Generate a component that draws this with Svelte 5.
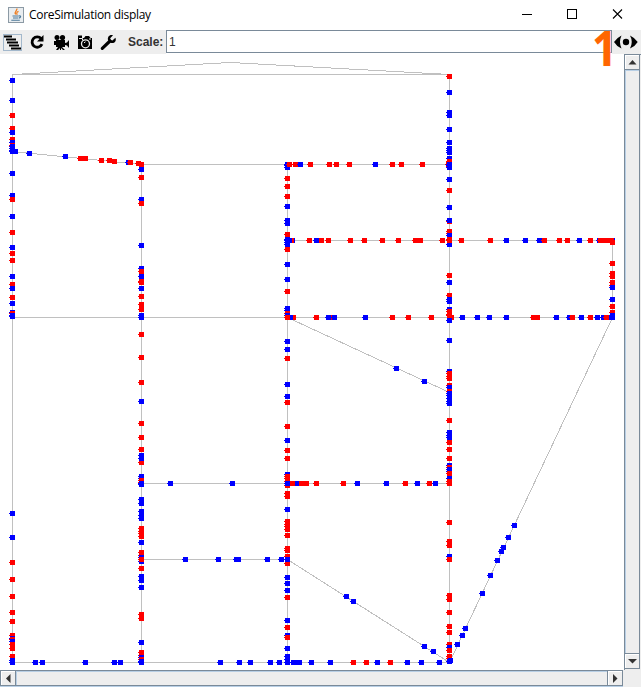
<script>
  // Road network: each entry is a polyline in canvas coordinates.
  const roads = [
    '12,74 449,74', '12,74 230,62 449,74', '12,74 12,662', '141,164 141,662', '287,164 287,662',
    '449,74 449,662', '141,164 449,164', '287,240 612,240', '12,317 612,317', '612,240 612,317',
    '141,483 449,483', '141,559 287,559', '12,662 449,662', '12,151 141,164',
    '287,317 449,392', '287,559 449,662', '449,662 612,317'
  ];

  // Vehicles on vertical roads: x, then colour + y in paint order.
  const columns = [
    [12, 'b80 b100 r115 r128 b132 r139 b142 r145 b146 b148 b150 b151 b173 b195 r199 b216 r232 b247 r253 r260 b276 r284 b288 r297 b303 b312 r313 b315 b316 b513 b537 r562 r579 r596 r612 r621 r635 b638 r639 b641 r644 r648 r656 b660 b662'],
    [141, 'b169 r164 r177 b199 r203 b245 b268 r271 b276 r281 r282 b288 r296 r304 r309 b315 b317 r334 r357 r382 b401 r423 r437 r449 b455 r462 b458 b476 b478 r480 r482 b483 b484 b499 b503 b511 b515 b518 r528 r531 r533 r536 b542 r552 r555 b557 b561 r559 r568 b576 b580 b587 r614 r618 b642 r652 r655 b657 r659 b661 b662'],
    [287, 'b164 b165 b167 r178 r186 r196 b206 b220 b223 r234 b239 r249 b240 b242 b244 b264 b279 r291 b308 b310 r313 b315 b341 b349 r358 b384 b396 r402 r426 b440 r450 r458 b474 r476 r478 r481 r485 r493 r496 b509 r521 r524 r526 r529 r535 r548 r550 r556 r563 b559 b577 b583 b590 r597 b620 r627 b635 r637 b648 b656 b659 b662'],
    [448, 'r164'],
    [449, 'r76 b92 b112 b115 b129 b142 b148 b150 b152 b158 r161 b164 b165 b167 b179 r190 b207 r221 b220 r231 r233 b235 b244 r239 r275 b282 r295 b299 b301 b309 r311 r314 b340 b371 r373 r376 r378 r385 b387 r391 b393 b395 b398 b401 b403 r420 b432 b435 b437 r442 r449 r458 b465 r467 b469 b471 r473 b478 r481 r522 r541 r545 b556 r559 r595 r599 r612 r626 r632 r644 b647 r650 r656 r658'],
    [612, 'b240 r242 r263 r273 r276 r282 r285 b287 b299 r306 r312 b315']
  ];

  // Vehicles on horizontal roads: y, then colour + x in paint order.
  const rows = [
    [164, 'r295 r289 b300 r310 r329 r336 r349 b375 r392 r401 r422'],
    [240, 'b292 r291 b289 b287 r309 r321 b316 r328 r350 r364 r382 r398 r415 r420 r442 r449 r461 r490 b506 b525 b539 r544 r559 r567 b579 r590 b599 r600 r604 r606 r608 r611'],
    [317, 'r293 b290 r287 r316 r331 b334 b328 b365 r392 r408 r431 r451 b462 b477 b489 b506 r533 r537 b556 b569 r572 b581 r590 b597 b603 b609 r606 b612'],
    [483, 'b170 b232 r306 r303 r300 b296 r292 b287 r316 r343 b357 b386 r405 b417 r429 b435 r449'],
    [559, 'b185 b218 b236 b238 b267 b281 b287'],
    [662, 'b35 b42 b85 b114 b120 b220 b239 b250 b270 b279 b287 b293 b296 b299 b311 b330 r353 r366 b377 r390 b407 b421 b439']
  ];

  const others = [
    ['b', 15, 151], ['b', 29, 153], ['b', 65, 156], ['r', 80, 158], ['r', 85, 158], ['r', 101, 160],
    ['r', 109, 160], ['r', 114, 161], ['b', 128, 162], ['r', 130, 162], ['r', 138, 163], ['r', 141, 164],
    ['b', 396, 368], ['b', 424, 381], ['b', 346, 596], ['b', 353, 601], ['b', 424, 646], ['b', 433, 651],
    ['b', 514, 525], ['b', 508, 537], ['b', 503, 547], ['b', 501, 551], ['b', 497, 560], ['b', 490, 575],
    ['b', 482, 593], ['b', 465, 628], ['b', 462, 635], ['b', 457, 644], ['b', 450, 660], ['b', 449, 661],
    ['b', 449, 320], ['r', 449, 315], ['b', 612, 317]
  ];

  const cars = [
    ...columns.flatMap(([x, list]) => list.split(' ').map((s) => [s[0], x, +s.slice(1)])),
    ...rows.flatMap(([y, list]) => list.split(' ').map((s) => [s[0], +s.slice(1), y])),
    ...others
  ];
</script>

<div class="window">
  <header class="title">
    <svg class="java" width="16" height="16" viewBox="0 0 16 16">
      <rect x=".5" y=".5" width="15" height="15" fill="#e9edf0" stroke="#8c9aa5" />
      <path d="M8.8 1.5c1 2-3.2 3-1.2 6M10.5 4.3C8 5.5 8.5 6 9.2 7.7" fill="none" stroke="#ee7b1c" stroke-width="1.3" />
      <path d="M4.5 9h6.3M5 11h5.2M3.3 13.3h8.5M11 9c2.4-.5 2 1.6-.2 2.2" fill="none" stroke="#4c7898" stroke-width="1.1" />
    </svg>
    <span class="caption">CoreSimulation display</span>
    <svg class="controls" width="122" height="30" viewBox="0 0 122 30" shape-rendering="crispEdges">
      <path d="M3 14.5h10M48.500 9.500h9v9h-9z" fill="none" stroke="#000" />
      <path d="M94 9.500l9 9M103 9.500l-9 9" stroke="#000" stroke-width="1.1" shape-rendering="auto" />
    </svg>
  </header>

  <div class="toolbar">
    <svg class="tools" width="125" height="24" viewBox="0 0 125 24">
      <rect x="3.500" y="4.500" width="18" height="16" fill="#eee" stroke="#a3b8cc" />
      <path d="M4 6.500h8M6 9.500h10M7 12.500h11M9 15.500h10M11 18.500h10" stroke="#000" stroke-width="2" />
      <path d="M41.200 8.600A5.200 5.200 0 1 0 42 14.200" fill="none" stroke="#000" stroke-width="2.800" />
      <path d="M43.500 5v6.500H37z" />
      <circle cx="57" cy="7.500" r="2.500" /><circle cx="62.500" cy="7.500" r="2.600" />
      <path d="M56 10h9v7h-3l3 3h-2l-2-2v2h-1v-2l-2 2h-2l2-3h-2zM54 11h2v4h-2zM65 13l2-.5 2-2.500v8l-2-2.500-2-.5z" />
      <path d="M78 5.500h4V8h2l1.500-2h3.500L90.500 8H92v11H78z" />
      <circle cx="85.500" cy="13.800" r="4" fill="#000" stroke="#eee" stroke-width="1.300" />
      <path d="M84 12.800l1.500-1M79 8.500h3.500v1.500M89 9h2" stroke="#eee" fill="none" />
      <path d="M102.300 18.300L110 11" stroke="#000" stroke-width="3.200" stroke-linecap="round" />
      <path d="M113 5.300l-2.800 3 .5 1.700 1.700.4 3-2.700c1.500 3.200-1.200 6.300-4.800 5.100l-2.500-2.500c-1-3.200 1.500-6.200 4.900-5z" />
    </svg>
    <span class="label">Scale:</span>
    <div class="field">1</div>
    <svg class="eye" width="29" height="24" viewBox="0 0 29 24">
      <path d="M9.500 5.500Q4.500 8 2 12q2.500 4.300 7.500 6.500Q6.500 12 9.500 5.500zM18 5.500q5.200 2.500 7.700 6.500-2.500 4.300-7.700 6.500 3.500-6.500 0-13z" />
      <circle cx="14" cy="12" r="3.200" />
    </svg>
  </div>

  <div class="view">
    <svg class="canvas" width="624" height="616" viewBox="0 54 624 616" shape-rendering="crispEdges">
      <g transform="translate(.5 .5)" fill="none" stroke="#c0c0c0">
        {#each roads as points}<polyline {points} stroke-linecap="square" />{/each}
      </g>
      {#each cars as [c, x, y]}
        <g class={c === 'r' ? 'red' : 'blue'}>
          <rect x={x - 2} y={y - 2} width="5" height="5" />
          <rect x={x - 3} {y} width="1" height="1" />
        </g>
      {/each}
    </svg>
    <div class="vbar">
      <div class="btn"><svg width="9" height="5" viewBox="0 0 9 5"><path d="M4.500 0L8.500 4.500h-8z" /></svg></div>
      <div class="track"></div>
      <div class="btn"><svg width="9" height="5" viewBox="0 0 9 5"><path d="M0 0h9L4.500 4.500z" /></svg></div>
    </div>
  </div>

  <div class="bottom">
    <div class="hbar">
      <div class="btn"><svg width="5" height="9" viewBox="0 0 5 9"><path d="M4.500 0v9L0 4.500z" /></svg></div>
      <div class="track"></div>
      <div class="btn"><svg width="5" height="9" viewBox="0 0 5 9"><path d="M0 0v9l4.500-4.500z" /></svg></div>
    </div>
  </div>

  <span class="callout">1</span>
</div>

<style>
  .window { position: relative; width: 641px; height: 687px; overflow: hidden; display: flex; flex-direction: column; background: #fff; color: #000; }
  svg { display: block; flex: none; }
  .title { height: 30px; flex: none; display: flex; align-items: center; padding-left: 8px; box-sizing: border-box; }
  .caption { margin-left: 5px; font: 12px/16px "Open Sans", "Noto Sans", sans-serif; letter-spacing: -0.3px; white-space: nowrap; }
  .controls { margin-left: auto; }
  .toolbar { height: 24px; flex: none; display: flex; background: #eee; }
  .label { width: 41px; padding-left: 3px; box-sizing: border-box; flex: none; font: bold 12px/25px "Liberation Sans", Arial, sans-serif; color: #333; }
  .field { flex: 1; height: 23px; box-sizing: border-box; border: 1px solid #7a8a99; background: #fff; padding-left: 2px; font: 12px/23px "Liberation Sans", Arial, sans-serif; color: #333; box-shadow: 0 1px #fff; }
  .view { height: 616px; flex: none; display: flex; }
  .red { fill: #f00; }
  .blue { fill: #00f; }
  .vbar { width: 17px; box-sizing: border-box; display: flex; flex-direction: column; border-left: 1px solid #7a8a99; border-top: 1px solid #7a8a99; background: #eee; }
  .btn { flex: none; display: flex; align-items: center; justify-content: center; box-sizing: border-box; background: #eee; fill: #333; }
  .vbar .btn { width: 15px; height: 15px; border: 1px solid #7a8a99; border-width: 0 1px 1px 0; box-shadow: inset 1px 1px #fff; }
  .vbar .btn:last-child { height: 16px; border-top-width: 1px; margin-bottom: 1px; }
  .vbar .track { flex: 1; width: 15px; box-sizing: border-box; border-right: 1px solid #7a8a99; box-shadow: inset 1px 1px #b8cfe5; }
  .bottom { height: 17px; flex: none; background: #eee; }
  .hbar { width: 623px; height: 16px; box-sizing: border-box; display: flex; border: 1px solid #7a8a99; box-shadow: 0 1px #b8cfe5; }
  .hbar .btn { width: 15px; height: 14px; border-right: 1px solid #7a8a99; box-shadow: inset 1px 1px #fff; }
  .hbar .btn:last-child { border-right: 0; border-left: 1px solid #7a8a99; }
  .hbar .track { flex: 1; box-shadow: inset 1px 1px #b8cfe5; }
  .callout { position: absolute; left: 592px; top: 20px; font: bold 49px/54px "Open Sans", "Noto Sans", sans-serif; color: #f60; text-shadow: 0 0 1px #fcc; transform: scaleX(.9); transform-origin: 0 50%; }
</style>
